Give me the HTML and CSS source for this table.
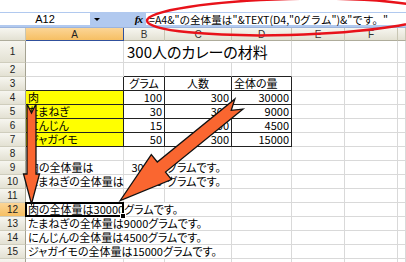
FILE: index.html
```html
<!DOCTYPE html>
<html lang="ja">
<head>
<meta charset="utf-8">
<title>300人のカレーの材料</title>
<link rel="stylesheet" href="styles.css">
</head>
<body>
<div class="app">
  <div class="top"></div>
  <div class="fbar">
    <div class="namebox">A12</div>
    <div class="dd"><span class="tri"></span></div>
    <div class="fx">fx</div>
    <div class="formula">=A4&amp;"の全体量は"&amp;TEXT(D4,"0グラム")&amp;"です。"</div>
  </div>
  <div class="sheet">
    <div class="corner"></div><div class="ch sel">A</div><div class="ch">B</div><div class="ch">C</div><div class="ch">D</div><div class="ch">E</div><div class="ch">F</div><div class="ch"></div>

    <div class="rh">1</div><div class="c"></div><div class="c title">300人のカレーの材料</div><div class="c"></div><div class="c"></div><div class="c"></div>

    <div class="rh">2</div><div class="c"></div><div class="c bb"></div><div class="c bb"></div><div class="c bb"></div><div class="c"></div><div class="c"></div><div class="c"></div>

    <div class="rh">3</div><div class="c br bb"></div><div class="c tb m">グラム</div><div class="c tb m">人数</div><div class="c tb">全体の量</div><div class="c"></div><div class="c"></div><div class="c"></div>

    <div class="rh">4</div><div class="c y tb">肉</div><div class="c tb n">100</div><div class="c tb n">300</div><div class="c tb n">30000</div><div class="c"></div><div class="c"></div><div class="c"></div>

    <div class="rh">5</div><div class="c y tb">たまねぎ</div><div class="c tb n">30</div><div class="c tb n">300</div><div class="c tb n">9000</div><div class="c"></div><div class="c"></div><div class="c"></div>

    <div class="rh">6</div><div class="c y tb">にんじん</div><div class="c tb n">15</div><div class="c tb n">300</div><div class="c tb n">4500</div><div class="c"></div><div class="c"></div><div class="c"></div>

    <div class="rh">7</div><div class="c y tb">ジャガイモ</div><div class="c tb n">50</div><div class="c tb n">300</div><div class="c tb n">15000</div><div class="c"></div><div class="c"></div><div class="c"></div>

    <div class="rh">8</div><div class="c"></div><div class="c"></div><div class="c"></div><div class="c"></div><div class="c"></div><div class="c"></div><div class="c"></div>

    <div class="rh">9</div><div class="c">肉の全体量は</div><div class="c n">30000</div><div class="c">グラムです。</div><div class="c"></div><div class="c"></div><div class="c"></div><div class="c"></div>

    <div class="rh">10</div><div class="c">たまねぎの全体量は</div><div class="c n">9000</div><div class="c">グラムです。</div><div class="c"></div><div class="c"></div><div class="c"></div><div class="c"></div>

    <div class="rh">11</div><div class="c"></div><div class="c"></div><div class="c"></div><div class="c"></div><div class="c"></div><div class="c"></div><div class="c"></div>

    <div class="rh sel">12</div><div class="c sp3 active">肉の全体量は30000グラムです。<span class="selbox"><span class="handle"></span></span></div><div class="c"></div><div class="c"></div><div class="c"></div><div class="c"></div>

    <div class="rh">13</div><div class="c sp3">たまねぎの全体量は9000グラムです。</div><div class="c"></div><div class="c"></div><div class="c"></div><div class="c"></div>

    <div class="rh">14</div><div class="c sp3">にんじんの全体量は4500グラムです。</div><div class="c"></div><div class="c"></div><div class="c"></div><div class="c"></div>

    <div class="rh">15</div><div class="c sp3">ジャガイモの全体量は15000グラムです。</div><div class="c"></div><div class="c"></div><div class="c"></div><div class="c"></div>

    <div class="rh"></div><div class="c"></div><div class="c"></div><div class="c"></div><div class="c"></div><div class="c"></div><div class="c"></div><div class="c"></div>
  </div>

  <svg class="overlay" width="406" height="262" viewBox="0 0 406 262">
    <ellipse cx="289" cy="17" rx="142" ry="18" transform="rotate(-1.5 289 17)" fill="none" stroke="#e8121a" stroke-width="2.5"/>
    <polygon class="arrow" points="27,104 31.5,113 36,104 36,174 39.5,174 31.5,204 23.5,174 27,174"/>
    <polygon class="arrow" transform="translate(239,104) rotate(140.9)" points="0,-6.5 100,-6.5 100,-16 153,0 100,16 100,6.5 0,6.5 10,0"/>
  </svg>
</div>
</body>
</html>
```
FILE: styles.css
```css
* {
  box-sizing: border-box;
  margin: 0;
  padding: 0;
}

html,
body {
  width: 406px;
  height: 262px;
  overflow: hidden;
  background: #fff;
}

body {
  font-family: "Noto Sans CJK JP", "Liberation Sans", sans-serif;
  font-feature-settings: "palt";
  color: #000;
}

.app {
  position: relative;
  width: 406px;
  height: 262px;
  overflow: hidden;
}

.top {
  height: 12px;
  background: #fff;
}

.fbar {
  height: 16px;
  background: #b1c9ef;
  display: flex;
  padding: 1px 0 2px;
  border-bottom: 1px solid #9cb4dc;
}

.namebox {
  width: 90px;
  background: #fff;
  font-family: "Liberation Sans", sans-serif;
  font-size: 11px;
  line-height: 12px;
  text-align: center;
}

.dd {
  width: 14px;
  display: flex;
  align-items: center;
  justify-content: center;
}

.tri {
  width: 0;
  height: 0;
  border-left: 3px solid transparent;
  border-right: 3px solid transparent;
  border-top: 3px solid #000;
}

.fx {
  width: 42px;
  text-align: right;
  padding-right: 4px;
  font-family: "Liberation Serif", serif;
  font-style: italic;
  font-weight: bold;
  font-size: 11px;
  line-height: 12px;
  letter-spacing: -1px;
}

.formula {
  flex: 1;
  background: #fff;
  font-size: 10.6px;
  line-height: 13px;
  padding-left: 3px;
  white-space: nowrap;
  font-feature-settings: normal;
}

.sheet {
  display: grid;
  grid-template-columns: 26px 98px 41px 67px 60px 53px 53px 1fr;
  grid-template-rows: 13px 22px repeat(15, 14px);
}

.corner,
.ch,
.rh {
  background: linear-gradient(#f7f6f0, #e3e1d3);
  border-right: 1px solid #c8c6b4;
  border-bottom: 1px solid #aeac9b;
  font-family: "Liberation Sans", sans-serif;
  font-size: 10px;
  color: #333;
  display: flex;
  align-items: center;
  justify-content: center;
}

.rh {
  border-right: 1px solid #a4a292;
  border-bottom: 1px solid #cfcdbd;
  color: #222;
}

.ch.sel {
  background: linear-gradient(#fbd596, #f6bf63);
  border-right-color: #30509c;
  border-bottom-color: #30509c;
  color: #222;
}

.rh.sel {
  background: linear-gradient(#fbd596, #f6bf63);
}

.c {
  border-right: 1px solid #d9d9d9;
  border-bottom: 1px solid #d9d9d9;
  font-size: 11px;
  line-height: 13px;
  white-space: nowrap;
  padding: 0 2px;
  display: flex;
  align-items: flex-end;
}

.n {
  justify-content: flex-end;
}

.m {
  justify-content: center;
}

.tb {
  border-right-color: #222;
  border-bottom-color: #222;
}

.bb {
  border-bottom-color: #222;
}

.br {
  border-right-color: #222;
}

.y {
  background: #ffff00;
}

.title {
  grid-column: span 3;
  font-size: 15px;
  line-height: 20px;
  padding-left: 3px;
}

.sp3 {
  grid-column: span 3;
  padding-left: 2px;
}

.active {
  position: relative;
}

.selbox {
  position: absolute;
  left: -1px;
  top: -1px;
  width: 99px;
  height: 15px;
  border: 2px solid #000;
}

.handle {
  position: absolute;
  right: -4px;
  bottom: -4px;
  width: 6px;
  height: 6px;
  background: #000;
  border: 1px solid #fff;
}

.overlay {
  position: absolute;
  left: 0;
  top: 0;
  pointer-events: none;
}

.arrow {
  fill: #fa6630;
  stroke: #111;
  stroke-width: 1.3;
  stroke-linejoin: miter;
}
```
